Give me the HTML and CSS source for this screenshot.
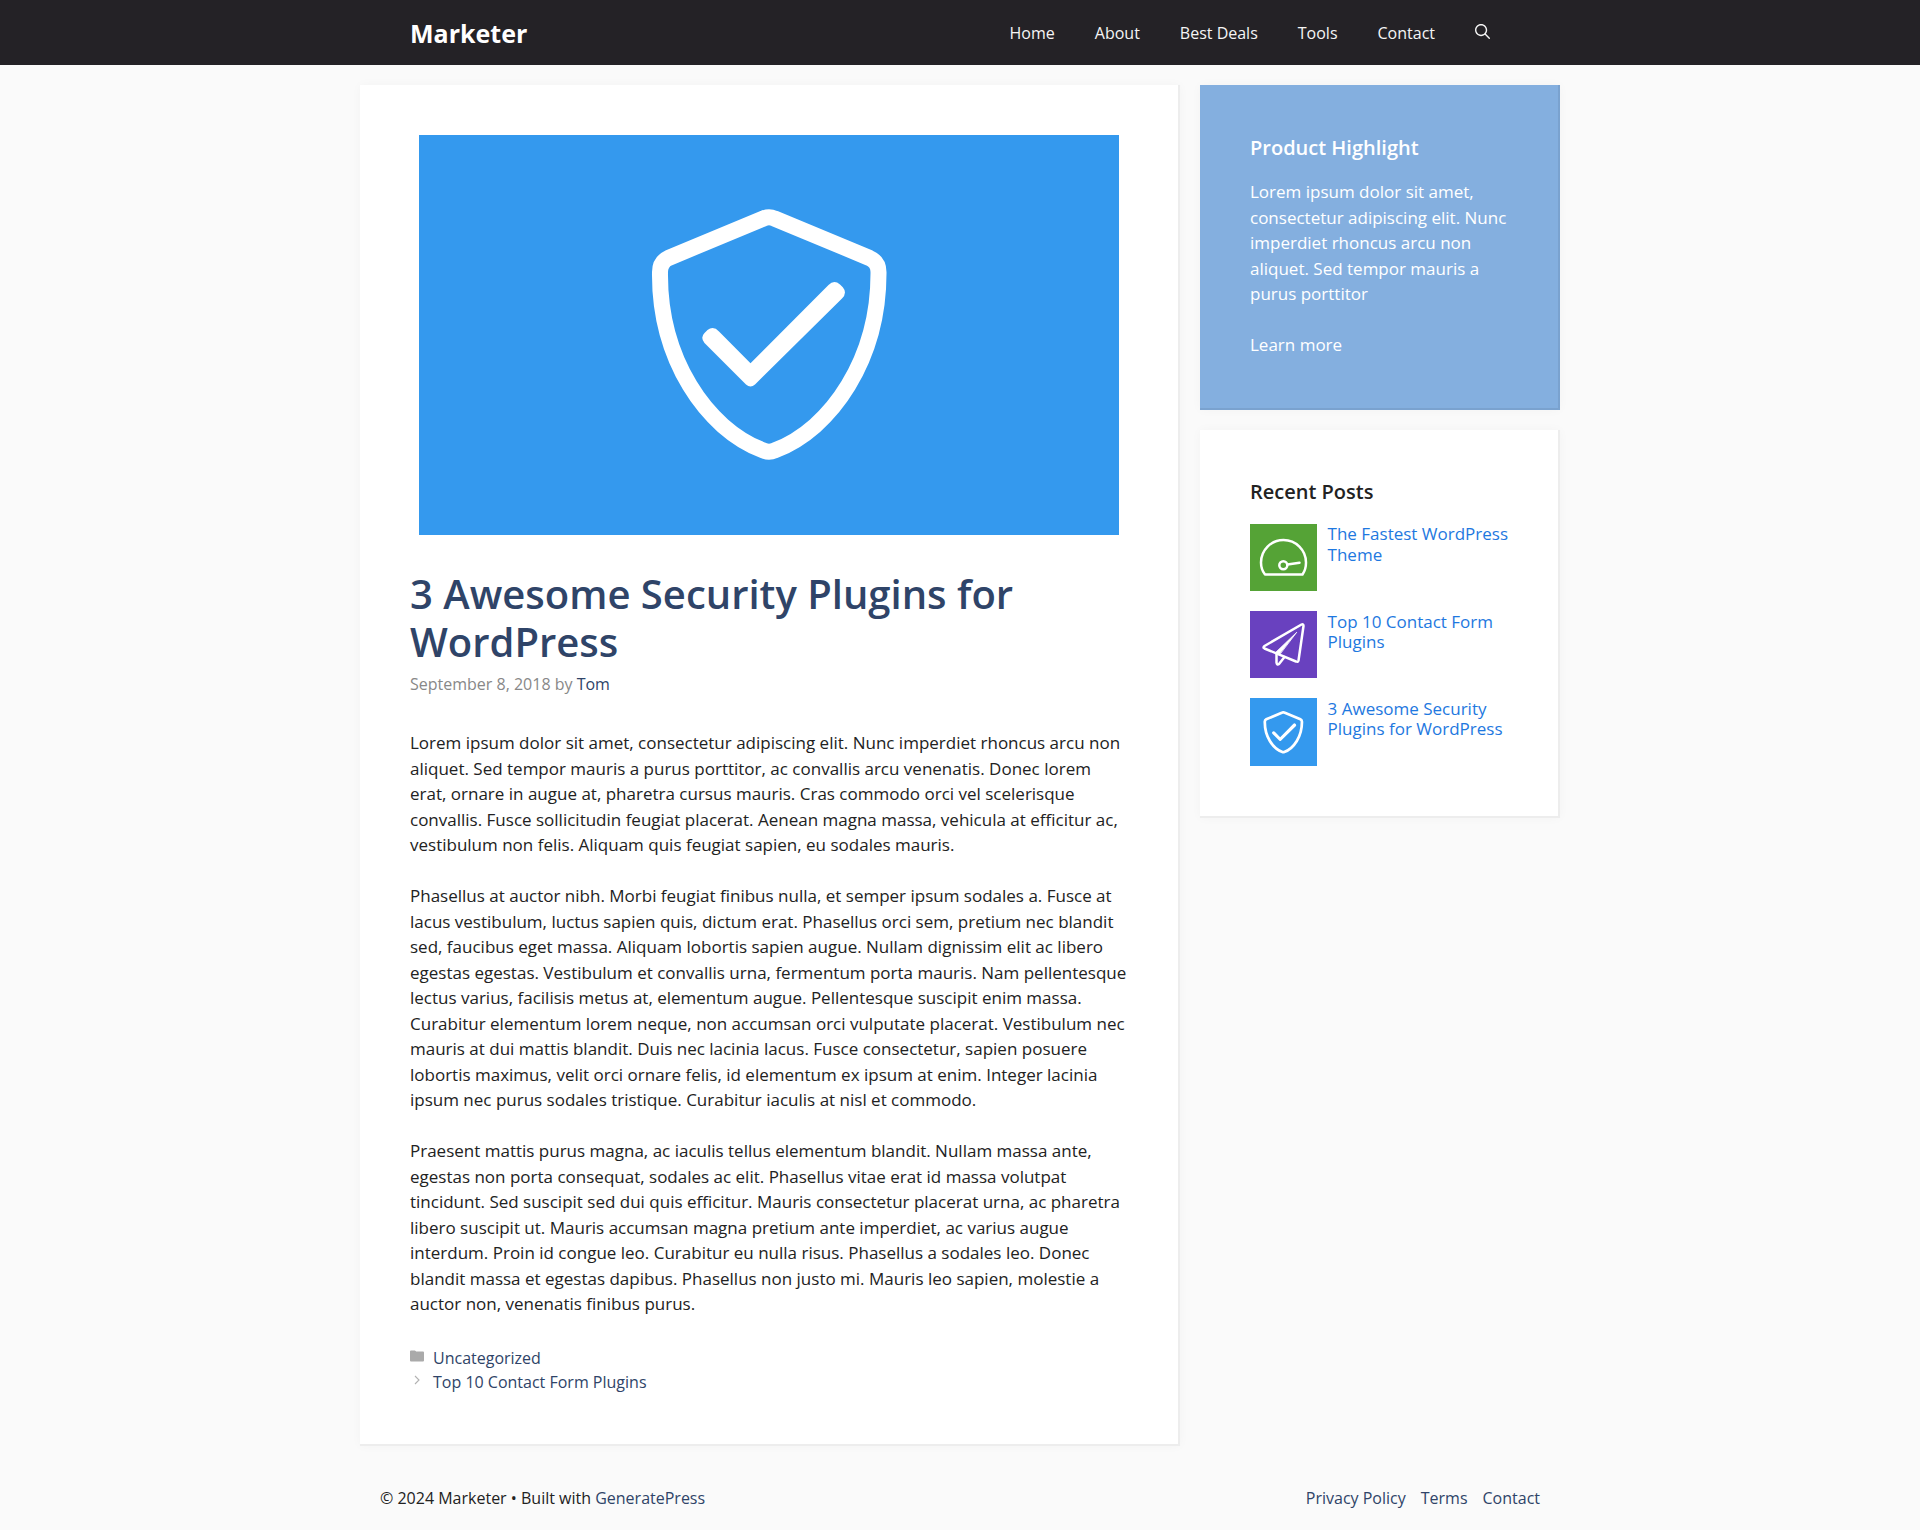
FILE: index.html
```html
<!DOCTYPE html>
<html lang="en">
<head>
<meta charset="utf-8">
<title>3 Awesome Security Plugins for WordPress</title>
<link rel="stylesheet" href="styles.css">
</head>
<body>
<svg class="defs" width="0" height="0" aria-hidden="true">
  <symbol id="shield" viewBox="0 0 300 300">
    <g fill="none" stroke="currentColor" stroke-width="16" stroke-linejoin="round" stroke-linecap="round">
      <path d="M143.500 38.500Q149 36 154.500 38.500L249.500 78Q258.500 82 258.500 92C259 178 212 249 154.500 270.500Q149 273 143.500 270.500C86 249 39 178 40 92Q40 82 48.500 78Z"/>
    </g>
    <path fill="currentColor" d="M130.500 183.300L208.500 105Q214 99.500 220 104.500L222.800 107.300Q227.500 113 222 118.500L135 204.500Q130.500 208.500 126 204.500L84.500 163Q80 157.500 84.500 153L87.500 150Q93.500 145.500 99 151.500Z"/>
  </symbol>
</svg>
<header class="site-header">
  <div class="header-inner">
    <a class="brand" href="#">Marketer</a>
    <nav class="main-nav">
      <a href="#">Home</a>
      <a href="#">About</a>
      <a href="#">Best Deals</a>
      <a href="#">Tools</a>
      <a href="#">Contact</a>
      <a href="#" class="search" aria-label="Search"><svg viewBox="0 0 512 512" width="15" height="15"><path fill="currentColor" fill-rule="evenodd" clip-rule="evenodd" d="M208 48c-88.366 0-160 71.634-160 160s71.634 160 160 160 160-71.634 160-160S296.366 48 208 48zM0 208C0 93.125 93.125 0 208 0s208 93.125 208 208c0 48.741-16.765 93.566-44.843 129.024l133.826 134.018c9.366 9.379 9.355 24.575-.025 33.941-9.379 9.366-24.575 9.355-33.941-.025L337.238 370.987C301.747 399.167 256.839 416 208 416 93.125 416 0 322.875 0 208z"/></svg></a>
    </nav>
  </div>
</header>
<div class="content">
  <article class="card post">
    <div class="featured"><svg width="300" height="300"><use href="#shield"/></svg></div>
    <h1>3 Awesome Security Plugins for WordPress</h1>
    <div class="meta">September 8, 2018 by <a href="#">Tom</a></div>
    <div class="entry">
      <p>Lorem ipsum dolor sit amet, consectetur adipiscing elit. Nunc imperdiet rhoncus arcu non aliquet. Sed tempor mauris a purus porttitor, ac convallis arcu venenatis. Donec lorem erat, ornare in augue at, pharetra cursus mauris. Cras commodo orci vel scelerisque convallis. Fusce sollicitudin feugiat placerat. Aenean magna massa, vehicula at efficitur ac, vestibulum non felis. Aliquam quis feugiat sapien, eu sodales mauris.</p>
      <p>Phasellus at auctor nibh. Morbi feugiat finibus nulla, et semper ipsum sodales a. Fusce at lacus vestibulum, luctus sapien quis, dictum erat. Phasellus orci sem, pretium nec blandit sed, faucibus eget massa. Aliquam lobortis sapien augue. Nullam dignissim elit ac libero egestas egestas. Vestibulum et convallis urna, fermentum porta mauris. Nam pellentesque lectus varius, facilisis metus at, elementum augue. Pellentesque suscipit enim massa. Curabitur elementum lorem neque, non accumsan orci vulputate placerat. Vestibulum nec mauris at dui mattis blandit. Duis nec lacinia lacus. Fusce consectetur, sapien posuere lobortis maximus, velit orci ornare felis, id elementum ex ipsum at enim. Integer lacinia ipsum nec purus sodales tristique. Curabitur iaculis at nisl et commodo.</p>
      <p>Praesent mattis purus magna, ac iaculis tellus elementum blandit. Nullam massa ante, egestas non porta consequat, sodales ac elit. Phasellus vitae erat id massa volutpat tincidunt. Sed suscipit sed dui quis efficitur. Mauris consectetur placerat urna, ac pharetra libero suscipit ut. Mauris accumsan magna pretium ante imperdiet, ac varius augue interdum. Proin id congue leo. Curabitur eu nulla risus. Phasellus a sodales leo. Donec blandit massa et egestas dapibus. Phasellus non justo mi. Mauris leo sapien, molestie a auctor non, venenatis finibus purus.</p>
    </div>
    <footer class="post-links">
      <div class="post-link"><svg width="14" height="12" viewBox="0 0 14 12"><path fill="#aaa" d="M0 1.500Q0 .5 1 .5H4.800Q5.300 .5 5.600 1L6.100 1.500H13Q14 1.500 14 2.500V10.500Q14 11.500 13 11.500H1Q0 11.500 0 10.500Z"/></svg><a href="#">Uncategorized</a></div>
      <div class="post-link"><svg width="14" height="12" viewBox="0 0 14 12"><path fill="none" stroke="#b2b2b2" stroke-width="1.100" d="M5 2L9 6L5 10"/></svg><a href="#">Top 10 Contact Form Plugins</a></div>
    </footer>
  </article>
  <aside class="sidebar">
    <section class="card widget highlight">
      <h2>Product Highlight</h2>
      <p>Lorem ipsum dolor sit amet, consectetur adipiscing elit. Nunc imperdiet rhoncus arcu non aliquet. Sed tempor mauris a purus porttitor</p>
      <p><a href="#">Learn more</a></p>
    </section>
    <section class="card widget">
      <h2>Recent Posts</h2>
      <ul class="recent">
        <li><span class="thumb green"><svg width="67" height="67" viewBox="0 0 67 67" fill="none" stroke="currentColor" stroke-width="2.500" stroke-linejoin="round" stroke-linecap="round"><path d="M15 50.500Q11 45.500 11 38.500A22.500 22.500 0 0 1 56 38.500Q56 45.500 52.500 50.500Z"/><circle cx="33.300" cy="41.300" r="4"/><path d="M37.500 40.500L49.500 38.700"/></svg></span><a href="#">The Fastest WordPress Theme</a></li>
        <li><span class="thumb purple"><svg width="67" height="67" viewBox="0 0 67 67" fill="none" stroke="currentColor" stroke-width="2.500" stroke-linejoin="round" stroke-linecap="round"><path d="M51.500 13.500Q53.500 12.500 53.500 15L48.500 49.500Q48 51.500 46 50.500L14.500 37.500Q12.500 36.500 14.500 35Z"/><path d="M26.500 42.500V51.500Q27 54.500 29 53L34.500 46"/><path fill="currentColor" stroke-width=".8" d="M46.500 21.500L25.500 41.500L29 44Z"/></svg></span><a href="#">Top 10 Contact Form Plugins</a></li>
        <li><span class="thumb blue"><svg width="51" height="51"><use href="#shield"/></svg></span><a href="#">3 Awesome Security Plugins for WordPress</a></li>
      </ul>
    </section>
  </aside>
</div>
<footer class="site-footer">
  <div>© 2024 Marketer • Built with <a href="#">GeneratePress</a></div>
  <nav><a href="#">Privacy Policy</a><a href="#">Terms</a><a href="#">Contact</a></nav>
</footer>
</body>
</html>
```
FILE: styles.css
```css
* { box-sizing: border-box; }
body {
  margin: 0;
  background: #fafafa;
  color: #222;
  font: 400 17px/1.5 "Open Sans", sans-serif;
}
a { color: #2f4468; text-decoration: none; }
p, h1, h2, ul { margin: 0; padding: 0; }
.defs { position: absolute; }

.site-header { background: #242226; }
.header-inner {
  display: flex;
  justify-content: space-between;
  align-items: center;
  width: 1200px;
  height: 65px;
  margin: 0 auto;
  padding: 2px 50px 0;
}
.brand { color: #fff; font-size: 25px; font-weight: 700; line-height: 37px; }
.main-nav { display: flex; }
.main-nav a { padding: 0 20px; color: #f5f5f5; font-size: 16px; line-height: 63px; }
.search svg { display: inline-block; }

.content {
  display: flex;
  align-items: flex-start;
  gap: 20px;
  width: 1200px;
  margin: 20px auto 0;
}
.card {
  background: #fff;
  padding: 50px;
  border: 0 solid rgba(0, 0, 0, .07);
  border-width: 0 2px 2px 0;
  box-shadow: 0 0 10px rgba(0, 0, 0, .03);
}
.post { width: 820px; }
.featured {
  width: 700px;
  height: 400px;
  margin: 0 auto 35px;
  padding: 45px 0 0 201px;
  background: #3499ee;
  color: #fff;
}
h1 { color: #2f4468; font-size: 40px; font-weight: 600; line-height: 48px; }
.meta { margin-top: 6px; color: #888; font-size: 16px; line-height: 24px; }
.entry { display: flex; flex-direction: column; gap: 25.5px; margin-top: 34px; }
.post-links { margin-top: 29px; }
.post-link { display: flex; gap: 9px; font-size: 16px; line-height: 24px; }
.post-link svg { margin-top: 4px; }

.sidebar { display: flex; flex-direction: column; gap: 20px; width: 360px; }
.widget h2 { margin-bottom: 20px; font-size: 20px; font-weight: 600; line-height: 24px; }
.highlight { background: #84afdf; color: #fff; }
.widget.highlight h2 { margin-bottom: 18px; line-height: 26px; }
.highlight a { color: #fff; }
.highlight p + p { margin-top: 25.5px; }
.recent { display: flex; flex-direction: column; gap: 20px; margin-right: -3px; list-style: none; }
.recent li { display: flex; gap: 10.4px; line-height: 20.4px; }
.recent a { padding-top: .7px; color: #1e78e0; }
.thumb {
  display: flex;
  flex: none;
  align-items: center;
  justify-content: center;
  width: 67.2px;
  height: 67.4px;
  color: #fff;
}
.green { background: #55a336; }
.purple { background: #6941bf; }
.blue { background: #3499ee; }

.site-footer {
  display: flex;
  justify-content: space-between;
  width: 1200px;
  margin: 0 auto;
  padding: 40px 20px 19px;
  font-size: 16px;
  line-height: 24px;
}
.site-footer nav { display: flex; gap: 15px; }
```
